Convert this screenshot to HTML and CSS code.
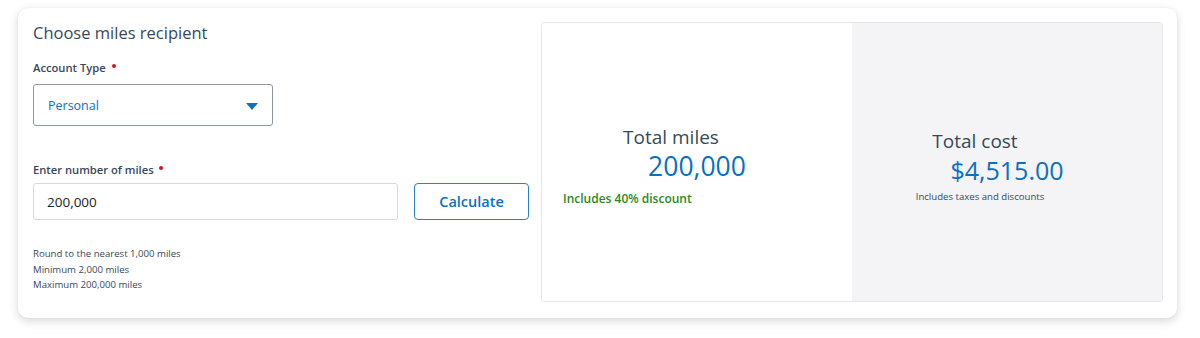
FILE: index.html
```html
<!DOCTYPE html>
<html lang="en">
<head>
  <meta charset="UTF-8" />
  <meta name="viewport" content="width=device-width, initial-scale=1.0" />
  <title>Buy miles</title>
  <link rel="stylesheet" href="styles.css">
</head>
<body>

  <section class="card">
    <div class="form-col">
      <h2 class="title">Choose miles recipient</h2>

      <label class="field-label">Account Type <span class="req"></span></label>
      <div class="select">
        <span>Personal</span>
        <svg class="caret" width="12" height="7" viewBox="0 0 12 7"><path d="M0 0 L12 0 L6 7 Z" fill="#0b6fc4"/></svg>
      </div>

      <label class="field-label miles-label">Enter number of miles <span class="req"></span></label>
      <div class="miles-row">
        <div class="miles-input">200,000</div>
        <button class="calc-btn">Calculate</button>
      </div>

      <div class="hints">
        <p>Round to the nearest 1,000 miles</p>
        <p>Minimum 2,000 miles</p>
        <p>Maximum 200,000 miles</p>
      </div>
    </div>

    <div class="summary">
      <div class="summary-half">
        <div class="summary-title shift-miles">Total miles</div>
        <div class="summary-value">200,000</div>
        <div class="discount">Includes 40% discount</div>
      </div>
      <div class="summary-half grey">
        <div class="summary-title shift-cost">Total cost</div>
        <div class="summary-value">$4,515.00</div>
        <div class="taxes">Includes taxes and discounts</div>
      </div>
    </div>
  </section>

</body>
</html>
```

FILE: styles.css
```css
* {
  box-sizing: border-box;
}

body {
  margin: 0;
  padding: 8px 23px 20px 18px;
  background: #ffffff;
  font-family: 'Open Sans', sans-serif;
  color: #36495a;
}

.card {
  display: flex;
  gap: 12px;
  height: 310px;
  padding: 14px 14px 16px 15px;
  background: #fff;
  border-radius: 10px;
  box-shadow: 0 3px 10px rgba(0, 0, 0, 0.16), 0 0 2px rgba(0, 0, 0, 0.06);
}

.form-col {
  width: 496px;
  flex-shrink: 0;
}

.title {
  margin: 0;
  font-size: 16.5px;
  line-height: 22px;
  font-weight: 400;
  color: #36495a;
}

.field-label {
  display: block;
  margin-top: 15px;
  font-size: 11.2px;
  line-height: 18px;
  font-weight: 600;
  color: #36495a;
}

.req {
  display: inline-block;
  width: 4px;
  height: 4px;
  margin-left: 3px;
  vertical-align: 4px;
  border-radius: 50%;
  background: #d0142c;
}

.select {
  display: flex;
  align-items: center;
  justify-content: space-between;
  width: 240px;
  height: 42px;
  margin-top: 7px;
  padding: 0 14px 0 14px;
  border: 1px solid #8d98a3;
  border-radius: 3px;
  font-size: 12.5px;
  color: #0b6fc4;
}

.caret {
  margin-top: 2px;
}

.miles-label {
  margin-top: 35px;
}

.miles-row {
  display: flex;
  gap: 16px;
  margin-top: 4px;
}

.miles-input {
  display: flex;
  align-items: center;
  width: 365px;
  height: 37px;
  padding-left: 13px;
  border: 1px solid #d3dbe1;
  border-radius: 3px;
  font-size: 13.5px;
  color: #222;
}

.calc-btn {
  width: 115px;
  height: 37px;
  padding: 0;
  border: 1px solid #2a7fcf;
  border-radius: 4px;
  background: #fff;
  font-family: 'Open Sans', sans-serif;
  font-size: 14.5px;
  font-weight: 600;
  color: #0b6fc4;
}

.hints {
  margin-top: 26px;
}

.hints p {
  margin: 0;
  font-size: 9.6px;
  line-height: 15.5px;
  color: #36495a;
}

.summary {
  display: flex;
  flex: 1;
  height: 280px;
  border: 1px solid #e4e6e9;
  border-radius: 3px;
  overflow: hidden;
}

.summary-half {
  display: flex;
  flex-direction: column;
  justify-content: center;
  flex: 1;
  padding: 10px 0 0 0;
  background: #fff;
}

.summary-half.grey {
  background: #f4f4f6;
}

.summary-title {
  text-align: center;
  font-size: 19px;
  line-height: 22px;
  color: #36495a;
}

.shift-miles {
  padding-right: 52px;
}

.shift-cost {
  padding-right: 64px;
}

.summary-value {
  text-align: center;
  font-size: 26.5px;
  line-height: 36px;
  color: #0b6fc4;
}

.grey .summary-value {
  font-size: 25px;
}

.discount {
  margin-top: 6px;
  padding-left: 21px;
  font-size: 12px;
  font-weight: 600;
  line-height: 18px;
  color: #2a8a1e;
}

.taxes {
  margin-top: 1px;
  padding-right: 54px;
  text-align: center;
  font-size: 9.6px;
  line-height: 16px;
  color: #36495a;
}
```
